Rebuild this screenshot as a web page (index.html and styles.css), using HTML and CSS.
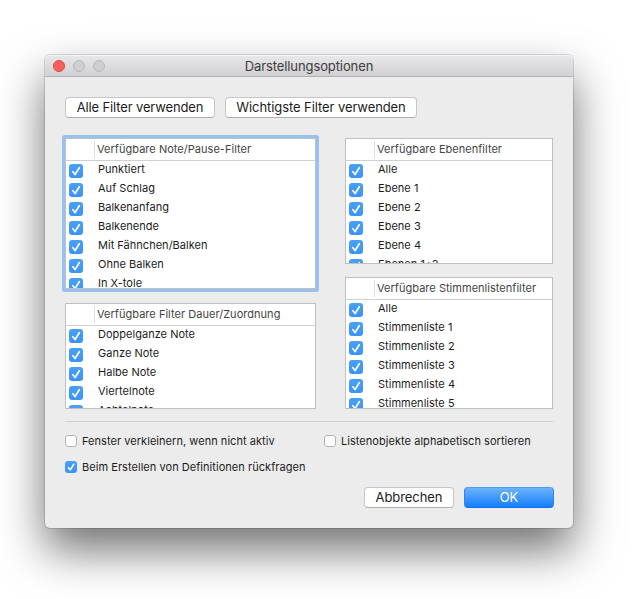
FILE: index.html
```html
<!DOCTYPE html>
<html lang="de">
<head>
<meta charset="utf-8">
<title>Darstellungsoptionen</title>
<link rel="stylesheet" href="styles.css">
</head>
<body>
<svg class="defs" width="0" height="0" aria-hidden="true">
  <symbol id="check" viewBox="0 0 14 14"><path d="M3.9 7.7 6.1 10.5 10.3 3.7" fill="none" stroke="#fff" stroke-width="1.7" stroke-linecap="round" stroke-linejoin="round"/></symbol>
</svg>
<main class="window">
  <header class="titlebar">
    <div class="lights"><i class="light close"></i><i class="light"></i><i class="light"></i></div>
    <h1 class="title">Darstellungsoptionen</h1>
  </header>
  <div class="content">
    <div class="toolbar">
      <button class="button all">Alle Filter verwenden</button>
      <button class="button main">Wichtigste Filter verwenden</button>
    </div>
    <div class="columns">
      <div class="column left">
        <section class="list notes focused">
          <h2 class="head"><span>Verfügbare Note/Pause-Filter</span></h2>
          <ul class="rows">
            <li><svg class="tick"><use href="#check"/></svg><span>Punktiert</span></li>
            <li><svg class="tick"><use href="#check"/></svg><span>Auf Schlag</span></li>
            <li><svg class="tick"><use href="#check"/></svg><span>Balkenanfang</span></li>
            <li><svg class="tick"><use href="#check"/></svg><span>Balkenende</span></li>
            <li><svg class="tick"><use href="#check"/></svg><span>Mit Fähnchen/Balken</span></li>
            <li><svg class="tick"><use href="#check"/></svg><span>Ohne Balken</span></li>
            <li><svg class="tick"><use href="#check"/></svg><span>In X-tole</span></li>
          </ul>
        </section>
        <section class="list durations">
          <h2 class="head"><span>Verfügbare Filter Dauer/Zuordnung</span></h2>
          <ul class="rows">
            <li><svg class="tick"><use href="#check"/></svg><span>Doppelganze Note</span></li>
            <li><svg class="tick"><use href="#check"/></svg><span>Ganze Note</span></li>
            <li><svg class="tick"><use href="#check"/></svg><span>Halbe Note</span></li>
            <li><svg class="tick"><use href="#check"/></svg><span>Viertelnote</span></li>
            <li><svg class="tick"><use href="#check"/></svg><span>Achtelnote</span></li>
          </ul>
        </section>
      </div>
      <div class="column right">
        <section class="list layers">
          <h2 class="head"><span>Verfügbare Ebenenfilter</span></h2>
          <ul class="rows">
            <li><svg class="tick"><use href="#check"/></svg><span>Alle</span></li>
            <li><svg class="tick"><use href="#check"/></svg><span>Ebene 1</span></li>
            <li><svg class="tick"><use href="#check"/></svg><span>Ebene 2</span></li>
            <li><svg class="tick"><use href="#check"/></svg><span>Ebene 3</span></li>
            <li><svg class="tick"><use href="#check"/></svg><span>Ebene 4</span></li>
            <li><svg class="tick"><use href="#check"/></svg><span>Ebenen 1+2</span></li>
          </ul>
        </section>
        <section class="list staves">
          <h2 class="head"><span>Verfügbare Stimmenlistenfilter</span></h2>
          <ul class="rows">
            <li><svg class="tick"><use href="#check"/></svg><span>Alle</span></li>
            <li><svg class="tick"><use href="#check"/></svg><span>Stimmenliste 1</span></li>
            <li><svg class="tick"><use href="#check"/></svg><span>Stimmenliste 2</span></li>
            <li><svg class="tick"><use href="#check"/></svg><span>Stimmenliste 3</span></li>
            <li><svg class="tick"><use href="#check"/></svg><span>Stimmenliste 4</span></li>
            <li><svg class="tick"><use href="#check"/></svg><span>Stimmenliste 5</span></li>
          </ul>
        </section>
      </div>
    </div>
    <div class="options">
      <div class="option"><i class="box"></i><span>Fenster verkleinern, wenn nicht aktiv</span></div>
      <div class="option"><i class="box"></i><span>Listenobjekte alphabetisch sortieren</span></div>
      <div class="option"><svg class="tick small"><use href="#check" width="12" height="12"/></svg><span>Beim Erstellen von Definitionen rückfragen</span></div>
    </div>
    <footer class="actions">
      <button class="button action">Abbrechen</button>
      <button class="button action primary">OK</button>
    </footer>
  </div>
</main>
</body>
</html>
```
FILE: styles.css
```css
* { box-sizing: border-box; }
body {
  margin: 0;
  width: 639px;
  height: 599px;
  overflow: hidden;
  background: #fff;
  padding: 55px 0 0 45px;
  font-family: Inter, "Liberation Sans", sans-serif;
  font-size: 11px;
  color: #1c1c1c;
}
h1, h2, ul { margin: 0; padding: 0; font-weight: 400; font-size: inherit; list-style: none; }
.defs { display: none; }
.window {
  width: 528px;
  height: 473px;
  border-radius: 5px;
  background: #ececec;
  box-shadow: 0 0 0 1px rgba(0,0,0,.13), 0 22px 46px rgba(0,0,0,.56);
}
.titlebar {
  display: grid;
  grid-template-columns: 60px 1fr 60px;
  align-items: center;
  height: 22px;
  border-bottom: 1px solid #b1b1b3;
  border-radius: 5px 5px 0 0;
  background: linear-gradient(#e8e7e9, #d1d0d2);
  box-shadow: inset 0 1px #f4f4f4;
}
.lights { display: flex; gap: 8px; padding-left: 8px; }
.light { width: 12px; height: 12px; border-radius: 50%; background: #cfcfcf; border: 1px solid #b9b9b9; }
.close { background: #fc605c; border-color: #df4744; }
.title { text-align: center; font-size: 13px; line-height: 22px; letter-spacing: -.1px; color: #3c3c3c; }
.content { padding: 20px 19px 0 20px; }
.toolbar { display: flex; gap: 10px; }
.button {
  height: 21px;
  padding: 0;
  border: 1px solid #c6c6c6;
  border-bottom-color: #adadad;
  border-radius: 4px;
  background: #fff;
  font: 13px/19px Inter, sans-serif;
  letter-spacing: -.08px;
  color: #1c1c1c;
  white-space: nowrap;
}
.all { width: 150px; letter-spacing: -.14px; }
.main { width: 192px; }
.columns { display: flex; gap: 29px; margin-top: 20px; }
.column { display: flex; flex-direction: column; }
.left { width: 251px; gap: 14px; }
.right { width: 208px; gap: 13px; }
.list { border: 1px solid #c0c0c0; background: #fff; overflow: hidden; }
.focused { box-shadow: 0 0 0 3px #96c1f0; border-radius: 1px; }
.notes { height: 151px; }
.durations { height: 106px; }
.layers { height: 126px; }
.staves { height: 132px; }
.head { height: 22px; padding: 2px 0 2px 28px; border-bottom: 1px solid #d0d0d0; color: #444; }
.head span { display: block; border-left: 1px solid #dcdcdc; padding-left: 2px; line-height: 16px; height: 17px; letter-spacing: .03px; white-space: nowrap; }
.rows li { display: flex; height: 19px; line-height: 16px; letter-spacing: .02px; white-space: nowrap; }
.tick { flex: none; width: 14px; height: 14px; margin: 3px 15px 0 3px; border-radius: 3px; background: linear-gradient(#48a0f8, #3b93f7); }
.options {
  display: grid;
  grid-template-columns: 259px 1fr;
  row-gap: 12px;
  margin-top: 12px;
  padding-top: 12px;
  width: 488px;
  border-top: 1px solid #d0d0d0;
  letter-spacing: .045px;
}
.option { display: flex; align-items: center; height: 14px; white-space: nowrap; }
.box { width: 12px; height: 12px; margin-right: 5px; border: 1px solid #b4b4b4; border-radius: 3px; background: #fff; }
.small { width: 12px; height: 12px; margin: 0 5px 0 0; }
.actions { display: flex; justify-content: flex-end; gap: 10px; margin-top: 13px; }
.action { width: 90px; }
.primary {
  border-color: #4a9df5 #2a86f6 #1470f0;
  background: linear-gradient(#6cb3fa, #157efb);
  color: #fff;
}
```
